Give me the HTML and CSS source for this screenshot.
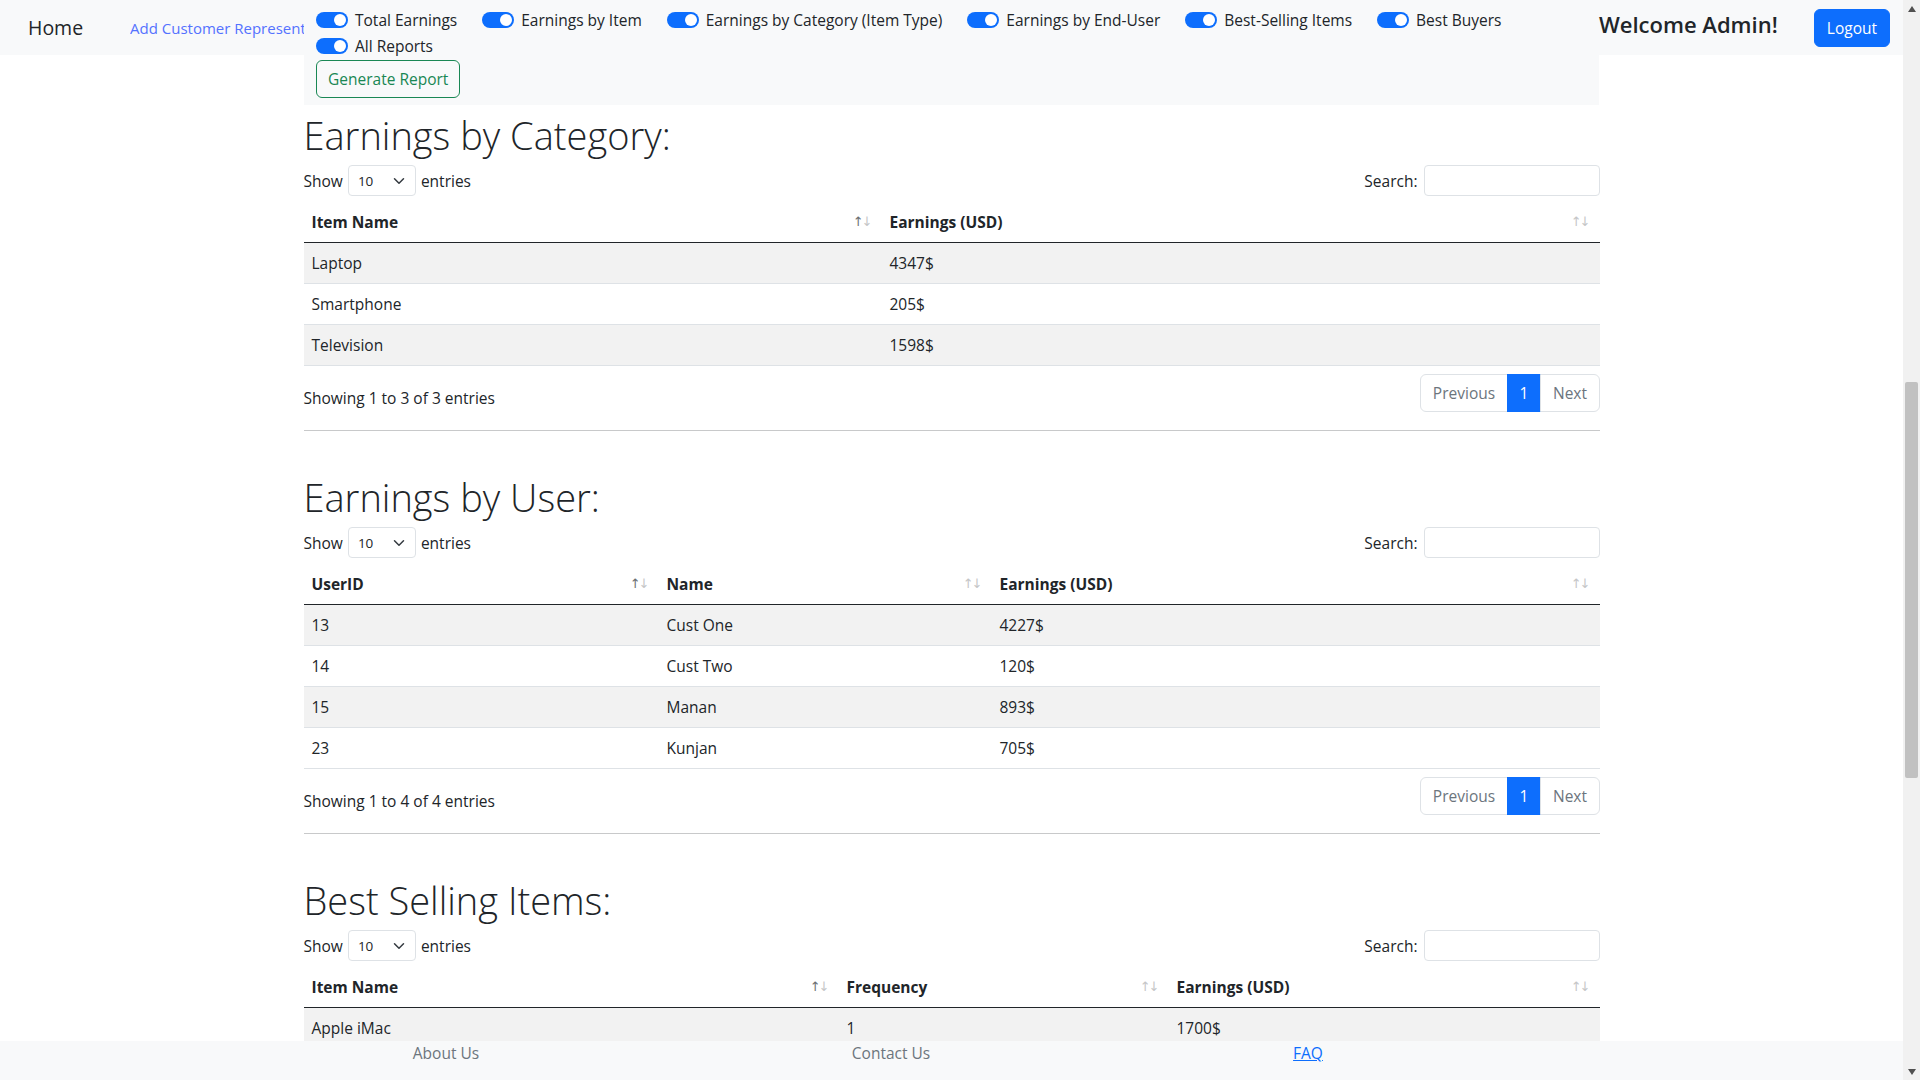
FILE: index.html
```html
<!DOCTYPE html>
<html lang="en">
<head>
<meta charset="utf-8">
<title>Reports</title>
<link rel="stylesheet" href="styles.css">
</head>
<body>
<div class="app">
  <div class="viewport">
    <nav class="navbar">
      <a class="brand" href="#">Home</a>
      <div class="nav-clip"><a href="#">Add Customer Representative</a></div>
      <form class="report-form">
        <div class="switches">
          <label class="switch-item"><span class="switch"></span>Total Earnings</label>
          <label class="switch-item"><span class="switch"></span>Earnings by Item</label>
          <label class="switch-item"><span class="switch"></span>Earnings by Category (Item Type)</label>
          <label class="switch-item"><span class="switch"></span>Earnings by End-User</label>
          <label class="switch-item"><span class="switch"></span>Best-Selling Items</label>
          <label class="switch-item"><span class="switch"></span>Best Buyers</label>
          <label class="switch-item"><span class="switch"></span>All Reports</label>
        </div>
        <button type="button" class="btn-gen">Generate Report</button>
      </form>
      <div class="welcome">Welcome Admin!</div>
      <button type="button" class="btn-logout">Logout</button>
    </nav>

    <main class="content">
      <div class="container">
        <section class="report">
          <h2 class="section-title">Earnings by Category:</h2>
          <div class="dt-top">
            <div class="dt-length">Show <span class="select"><span>10</span><svg width="12" height="12" viewBox="0 0 16 16"><path d="M2 5l6 6 6-6" fill="none" stroke="#343a40" stroke-width="2" stroke-linecap="round" stroke-linejoin="round"/></svg></span> entries</div>
            <div class="dt-search">Search: <span class="search-input"></span></div>
          </div>
          <table class="dt-table">
            <colgroup><col class="c-578"><col></colgroup>
            <thead>
              <tr>
                <th><div class="th-inner"><span>Item Name</span><span class="sort"><span class="on">↑</span><span>↓</span></span></div></th>
                <th><div class="th-inner"><span>Earnings (USD)</span><span class="sort"><span>↑</span><span>↓</span></span></div></th>
              </tr>
            </thead>
            <tbody>
              <tr><td>Laptop</td><td>4347$</td></tr>
              <tr><td>Smartphone</td><td>205$</td></tr>
              <tr><td>Television</td><td>1598$</td></tr>
            </tbody>
          </table>
          <div class="dt-bottom">
            <div class="dt-info">Showing 1 to 3 of 3 entries</div>
            <ul class="pagination">
              <li class="page-link first">Previous</li>
              <li class="page-link active">1</li>
              <li class="page-link last">Next</li>
            </ul>
          </div>
        </section>
        <hr class="divider">

        <section class="report">
          <h2 class="section-title">Earnings by User:</h2>
          <div class="dt-top">
            <div class="dt-length">Show <span class="select"><span>10</span><svg width="12" height="12" viewBox="0 0 16 16"><path d="M2 5l6 6 6-6" fill="none" stroke="#343a40" stroke-width="2" stroke-linecap="round" stroke-linejoin="round"/></svg></span> entries</div>
            <div class="dt-search">Search: <span class="search-input"></span></div>
          </div>
          <table class="dt-table">
            <colgroup><col class="c-355"><col class="c-333"><col></colgroup>
            <thead>
              <tr>
                <th><div class="th-inner"><span>UserID</span><span class="sort"><span class="on">↑</span><span>↓</span></span></div></th>
                <th><div class="th-inner"><span>Name</span><span class="sort"><span>↑</span><span>↓</span></span></div></th>
                <th><div class="th-inner"><span>Earnings (USD)</span><span class="sort"><span>↑</span><span>↓</span></span></div></th>
              </tr>
            </thead>
            <tbody>
              <tr><td>13</td><td>Cust One</td><td>4227$</td></tr>
              <tr><td>14</td><td>Cust Two</td><td>120$</td></tr>
              <tr><td>15</td><td>Manan</td><td>893$</td></tr>
              <tr><td>23</td><td>Kunjan</td><td>705$</td></tr>
            </tbody>
          </table>
          <div class="dt-bottom">
            <div class="dt-info">Showing 1 to 4 of 4 entries</div>
            <ul class="pagination">
              <li class="page-link first">Previous</li>
              <li class="page-link active">1</li>
              <li class="page-link last">Next</li>
            </ul>
          </div>
        </section>
        <hr class="divider">

        <section class="report">
          <h2 class="section-title">Best Selling Items:</h2>
          <div class="dt-top">
            <div class="dt-length">Show <span class="select"><span>10</span><svg width="12" height="12" viewBox="0 0 16 16"><path d="M2 5l6 6 6-6" fill="none" stroke="#343a40" stroke-width="2" stroke-linecap="round" stroke-linejoin="round"/></svg></span> entries</div>
            <div class="dt-search">Search: <span class="search-input"></span></div>
          </div>
          <table class="dt-table">
            <colgroup><col class="c-535"><col class="c-330"><col></colgroup>
            <thead>
              <tr>
                <th><div class="th-inner"><span>Item Name</span><span class="sort"><span class="on">↑</span><span>↓</span></span></div></th>
                <th><div class="th-inner"><span>Frequency</span><span class="sort"><span>↑</span><span>↓</span></span></div></th>
                <th><div class="th-inner"><span>Earnings (USD)</span><span class="sort"><span>↑</span><span>↓</span></span></div></th>
              </tr>
            </thead>
            <tbody>
              <tr><td>Apple iMac</td><td>1</td><td>1700$</td></tr>
            </tbody>
          </table>
        </section>
      </div>
    </main>

    <footer class="footer">
      <div class="foot-cell"><a href="#">About Us</a></div>
      <div class="foot-cell"><a href="#">Contact Us</a></div>
      <div class="foot-cell"><a href="#" class="faq">FAQ</a></div>
    </footer>
  </div>

  <div class="scrollbar">
    <div class="sb-btn"><svg width="8" height="6" viewBox="0 0 8 6"><polygon points="4,0 8,6 0,6" fill="#505050"/></svg></div>
    <div class="sb-track"><div class="sb-thumb"></div></div>
    <div class="sb-btn"><svg width="8" height="6" viewBox="0 0 8 6"><polygon points="0,0 8,0 4,6" fill="#505050"/></svg></div>
  </div>
</div>
</body>
</html>
```

FILE: styles.css
```css
* { box-sizing: border-box; }

html, body {
  margin: 0;
  padding: 0;
  height: 100%;
}

body {
  font-family: "Open Sans", "Liberation Sans", sans-serif;
  font-size: 15.5px;
  line-height: 24px;
  color: #212529;
  background: #fff;
  overflow: hidden;
}

.app {
  display: flex;
  width: 1920px;
  height: 1080px;
}

.viewport {
  width: 1903px;
  height: 1080px;
  display: flex;
  flex-direction: column;
}

/* ---------- navbar ---------- */
.navbar {
  flex: 0 0 55px;
  height: 55px;
  background: #f8f9fa;
  display: flex;
  align-items: flex-start;
  padding-left: 28px;
  padding-right: 13px;
}

.brand {
  flex: 0 0 102px;
  font-size: 19.5px;
  line-height: 30px;
  margin-top: 13px;
  color: #212529;
  text-decoration: none;
}

.nav-clip {
  flex: 0 0 174px;
  overflow: hidden;
  white-space: nowrap;
  margin-top: 16px;
  font-size: 15px;
}

.nav-clip a {
  color: #5472ff;
  text-decoration: none;
}

.report-form {
  flex: 0 0 1295px;
  background: #f8f9fa;
  padding: 8px 12px 7px;
}

.switches {
  display: flex;
  flex-wrap: wrap;
  column-gap: 25px;
  row-gap: 2px;
}

.switch-item {
  display: flex;
  align-items: flex-start;
  height: 24px;
  white-space: nowrap;
}

.switch {
  width: 32px;
  height: 16px;
  margin-top: 4px;
  margin-right: 7px;
  border-radius: 8px;
  background: #0d6efd;
  display: flex;
  justify-content: flex-end;
  align-items: center;
  padding: 2px;
}

.switch::after {
  content: "";
  width: 12px;
  height: 12px;
  border-radius: 50%;
  background: #fff;
}

.btn-gen {
  display: block;
  margin-top: 2px;
  font: inherit;
  line-height: 24px;
  color: #198754;
  background: transparent;
  border: 1px solid #198754;
  border-radius: 6px;
  padding: 6px 11px;
}

.welcome {
  flex: 1;
  font-size: 22px;
  font-weight: 600;
  line-height: 29px;
  margin-top: 10px;
  white-space: nowrap;
}

.btn-logout {
  margin-top: 9px;
  font: inherit;
  line-height: 24px;
  color: #fff;
  background: #0d6efd;
  border: 1px solid #0d6efd;
  border-radius: 6px;
  padding: 6px 12px;
}

/* ---------- content ---------- */
.content {
  flex: 1;
  overflow: hidden;
  padding-top: 56px;
}

.container {
  width: 1320px;
  margin: 0 auto;
  padding: 0 12px;
}

.section-title {
  font-size: 38px;
  font-weight: 300;
  line-height: 48px;
  margin: 0 0 6px;
}

.divider {
  margin: 16px 0 42px;
  border: 0;
  border-top: 1px solid #c8c9ca;
  height: 0;
}

.dt-top {
  display: flex;
  justify-content: space-between;
  align-items: center;
  height: 31px;
}

.dt-length,
.dt-search {
  display: flex;
  align-items: center;
  white-space: pre;
}

.select {
  width: 68px;
  height: 31px;
  margin: 0 1px;
  border: 1px solid #dee2e6;
  border-radius: 4px;
  font-size: 13.5px;
  padding: 0 10px 0 9px;
  display: flex;
  align-items: center;
  justify-content: space-between;
}

.search-input {
  width: 176px;
  height: 31px;
  margin-left: 2px;
  border: 1px solid #dee2e6;
  border-radius: 4px;
  background: #fff;
}

.dt-table {
  width: 100%;
  border-collapse: collapse;
  table-layout: fixed;
  margin: 6px 0;
}

.c-578 { width: 578px; }
.c-355 { width: 355px; }
.c-333 { width: 333px; }
.c-535 { width: 535px; }
.c-330 { width: 330px; }

.dt-table th,
.dt-table td {
  padding: 8px;
  text-align: left;
  line-height: 24px;
  border-bottom: 1px solid #dee2e6;
}

.dt-table th {
  font-weight: 700;
  border-bottom-color: #212529;
}

.dt-table tbody tr:nth-child(odd) td {
  background: #f2f2f2;
}

.th-inner {
  display: flex;
  justify-content: space-between;
  align-items: center;
}

.sort {
  font-family: "DejaVu Sans", sans-serif;
  font-size: 13px;
  line-height: 24px;
  font-weight: 400;
  color: #c5c6c7;
  letter-spacing: -2px;
  padding-right: 3px;
}

.sort .on { color: #6c6f72; }

.dt-bottom {
  display: flex;
  justify-content: space-between;
  align-items: flex-start;
}

.dt-info {
  padding-top: 13.6px;
}

.pagination {
  display: flex;
  list-style: none;
  margin: 2px 0;
  padding: 0;
}

.page-link {
  display: block;
  padding: 6px 11.5px;
  line-height: 24px;
  border: 1px solid #dee2e6;
  color: #6c757d;
  background: #fff;
  margin-left: -1px;
}

.page-link.first {
  margin-left: 0;
  border-radius: 6px 0 0 6px;
}

.page-link.last {
  border-radius: 0 6px 6px 0;
}

.page-link.active {
  background: #0d6efd;
  border-color: #0d6efd;
  color: #fff;
  padding: 6px 12px;
}

/* ---------- footer ---------- */
.footer {
  flex: 0 0 39px;
  background: #f8f9fa;
  display: grid;
  grid-template-columns: 446px 444px 390px;
  padding-left: 223px;
}

.foot-cell {
  text-align: center;
}

.foot-cell a {
  color: #6c757d;
  text-decoration: none;
}

.foot-cell a.faq {
  color: #0d6efd;
  text-decoration: underline;
}

/* ---------- scrollbar ---------- */
.scrollbar {
  width: 17px;
  height: 1080px;
  background: #f1f1f1;
  display: flex;
  flex-direction: column;
}

.sb-btn {
  flex: 0 0 17px;
  display: flex;
  align-items: center;
  justify-content: center;
}

.sb-track {
  flex: 1;
  padding: 365px 2px 0;
}

.sb-thumb {
  height: 396px;
  background: #c1c1c1;
  border-radius: 2px;
}
```
